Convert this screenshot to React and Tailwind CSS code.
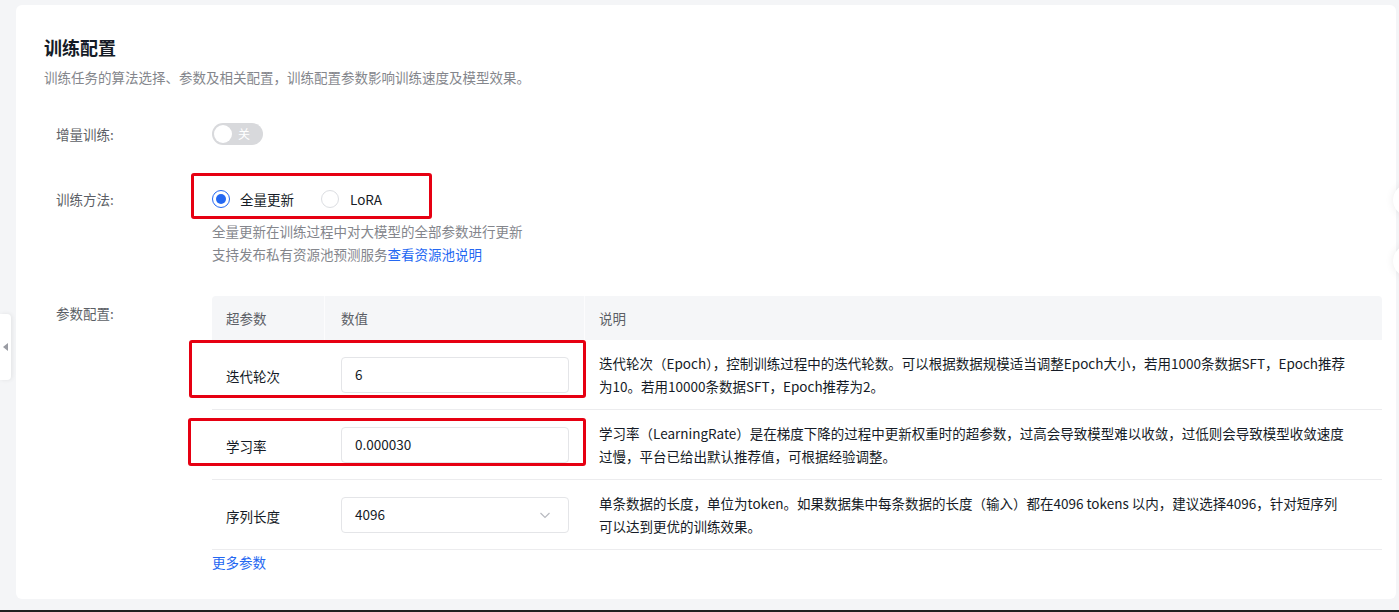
import React from "react";

function RedBox({ className }) {
  return (
    <div
      className={`pointer-events-none absolute rounded-[3px] border-[3px] border-[#e60012] ${className}`}
    />
  );
}

function Chevron() {
  return (
    <svg width="14" height="14" viewBox="0 0 14 14" fill="none">
      <path d="M2.5 5 L7 9.5 L11.5 5" stroke="#b8bac0" strokeWidth="1.2" />
    </svg>
  );
}

const rows = [
  {
    label: "迭代轮次",
    value: "6",
    type: "input",
    desc: [
      "迭代轮次（Epoch），控制训练过程中的迭代轮数。可以根据数据规模适当调整Epoch大小，若用1000条数据SFT，Epoch推荐",
      "为10。若用10000条数据SFT，Epoch推荐为2。",
    ],
  },
  {
    label: "学习率",
    value: "0.000030",
    type: "input",
    desc: [
      "学习率（LearningRate）是在梯度下降的过程中更新权重时的超参数，过高会导致模型难以收敛，过低则会导致模型收敛速度",
      "过慢，平台已给出默认推荐值，可根据经验调整。",
    ],
  },
  {
    label: "序列长度",
    value: "4096",
    type: "select",
    desc: [
      "单条数据的长度，单位为token。如果数据集中每条数据的长度（输入）都在4096 tokens 以内，建议选择4096，针对短序列",
      "可以达到更优的训练效果。",
    ],
  },
];

export default function App() {
  return (
    <div className="relative h-[612px] w-[1399px] overflow-hidden bg-[#f4f5f7] font-['Noto_Sans_CJK_SC',sans-serif]">
      <div className="flex h-[610px] flex-col">
        <div className="ml-[16px] mr-[3px] mt-[5px] h-[594px] rounded-[6px] bg-white pl-[28px] pr-[14px] pt-[30px]">
          <div className="text-[18px] font-bold leading-[24px] text-[#151b26]">训练配置</div>
          <div className="mt-[8px] text-[13.5px] leading-[20px] text-[#84868c]">
            训练任务的算法选择、参数及相关配置，训练配置参数影响训练速度及模型效果。
          </div>

          {/* 增量训练 */}
          <div className="mt-[36px] flex items-center">
            <div className="w-[168px] shrink-0 pl-[12px] text-[13.5px] leading-[22px] text-[#5c5f66]">增量训练:</div>
            <div className="flex h-[22px] w-[51px] items-center rounded-full bg-[#d8d9dc] px-[2px]">
              <div className="h-[18px] w-[18px] rounded-full bg-white" />
              <span className="ml-[6px] text-[12px] leading-[18px] text-white">关</span>
            </div>
          </div>

          {/* 训练方法 */}
          <div className="mt-[38px] flex">
            <div className="w-[168px] shrink-0 pl-[12px] text-[13.5px] leading-[32px] text-[#5c5f66]">训练方法:</div>
            <div className="flex flex-col">
              <div className="relative flex h-[32px] items-center">
                <div className="flex items-center">
                  <div className="flex h-[18px] w-[18px] items-center justify-center rounded-full border border-[#2468f2]">
                    <div className="h-[10px] w-[10px] rounded-full bg-[#2468f2]" />
                  </div>
                  <span className="ml-[10px] text-[13.5px] text-[#151b26]">全量更新</span>
                </div>
                <div className="ml-[27px] flex items-center">
                  <div className="h-[18px] w-[18px] rounded-full border border-[#dcdee2] bg-white" />
                  <span className="ml-[11px] text-[13.5px] text-[#151b26]">LoRA</span>
                </div>
                <RedBox className="left-[-21px] top-[-10px] h-[46px] w-[241px]" />
              </div>
              <div className="mt-[5px] text-[13.5px] leading-[23px] text-[#84868c]">
                <div>全量更新在训练过程中对大模型的全部参数进行更新</div>
                <div>
                  支持发布私有资源池预测服务<span className="text-[#2468f2]">查看资源池说明</span>
                </div>
              </div>
            </div>
          </div>

          {/* 参数配置 */}
          <div className="mt-[30px] flex">
            <div className="w-[168px] shrink-0 pl-[12px] pt-[7px] text-[13.5px] leading-[20px] text-[#5c5f66]">参数配置:</div>
            <div className="relative w-[1170px]">
              <div className="flex h-[44px] items-center rounded-t-[4px] bg-[#f5f6f8] text-[13.5px] text-[#5c5f66]">
                <div className="flex h-full w-[113px] items-center border-r border-[#fcfcfd] pl-[14px]">超参数</div>
                <div className="flex h-full w-[260px] items-center border-r border-[#fcfcfd] pl-[16px]">数值</div>
                <div className="flex h-full flex-1 items-center pl-[14px]">说明</div>
              </div>
              {rows.map((r) => (
                <div key={r.label} className="flex h-[70px] items-center border-b border-[#ececee] text-[13.5px] text-[#151b26]">
                  <div className="w-[113px] pl-[14px] pt-[4px]">{r.label}</div>
                  <div className="w-[260px] px-[16px]">
                    <div className="flex h-[36px] items-center justify-between rounded-[4px] border border-[#e4e5e8] bg-white pl-[13px] pr-[16px] text-[13.5px]">
                      <span>{r.value}</span>
                      {r.type === "select" && <Chevron />}
                    </div>
                  </div>
                  <div className="flex-1 pl-[14px] leading-[23px]">
                    {r.desc.map((d, i) => (
                      <div key={i} className="whitespace-nowrap">{d}</div>
                    ))}
                  </div>
                </div>
              ))}
              <div className="mt-[2px] text-[13.5px] leading-[20px] text-[#2468f2]">更多参数</div>
              <RedBox className="left-[-23px] top-[44px] h-[58px] w-[397px]" />
              <RedBox className="left-[-24px] top-[122px] h-[48px] w-[398px]" />
            </div>
          </div>
        </div>
      </div>
      <div className="h-[2px] w-full bg-[#1f1f1f]" />

      {/* left collapse tab */}
      <div className="absolute left-0 top-[314px] flex h-[66px] w-[11px] items-center justify-center rounded-r-[4px] bg-white shadow-[1px_0_4px_rgba(0,0,0,0.08)]">
        <div className="h-0 w-0 border-y-[4px] border-r-[5px] border-y-transparent border-r-[#9a9ca3]" />
      </div>

      {/* right floating buttons */}
      <div className="absolute left-[1393px] top-[184px] h-[32px] w-[32px] rounded-full bg-white shadow-[0_0_8px_rgba(0,0,0,0.08)]" />
      <div className="absolute left-[1393px] top-[245px] h-[32px] w-[32px] rounded-full bg-white shadow-[0_0_8px_rgba(0,0,0,0.08)]" />
    </div>
  );
}
